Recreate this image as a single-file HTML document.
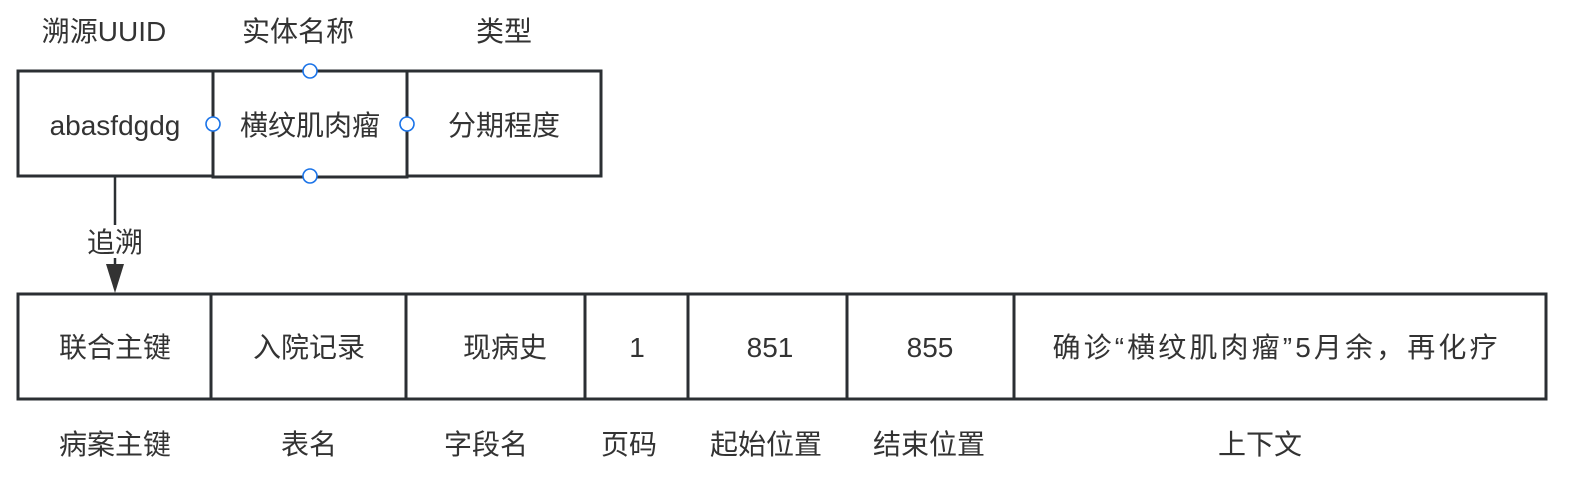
<!DOCTYPE html>
<html><head><meta charset="utf-8"><style>
body{margin:0;background:#fff;}
svg{display:block}
text{font-family:"Liberation Sans","Noto Sans CJK SC",sans-serif;font-size:28px;fill:#333;text-anchor:middle}
</style></head><body>
<svg width="1570" height="480" xmlns="http://www.w3.org/2000/svg">
<g fill="none" stroke="#2b2f33" stroke-width="3">
<rect x="18" y="71" width="195" height="105"/>
<rect x="213" y="71" width="194" height="106"/>
<rect x="407" y="71" width="194" height="105"/>
<rect x="18" y="294" width="1528" height="105"/>
<line x1="211" y1="294" x2="211" y2="399"/>
<line x1="406" y1="294" x2="406" y2="399"/>
<line x1="585" y1="294" x2="585" y2="399"/>
<line x1="688" y1="294" x2="688" y2="399"/>
<line x1="847" y1="294" x2="847" y2="399"/>
<line x1="1014" y1="294" x2="1014" y2="399"/>
<line x1="115" y1="177" x2="115" y2="225" stroke-width="2.5"/>
<line x1="115" y1="258" x2="115" y2="268" stroke-width="2.5"/>
</g>
<polygon points="106,264 124,264 115,293" fill="#333"/>
<g fill="#fff" stroke="#1a73e8" stroke-width="1.6">
<circle cx="310" cy="71" r="7"/><circle cx="310" cy="176" r="7"/>
<circle cx="213" cy="124" r="7"/><circle cx="407" cy="124" r="7"/>
</g>
<text x="104" y="41">溯源UUID</text>
<text x="298" y="41">实体名称</text>
<text x="504" y="41">类型</text>
<text x="115" y="135">abasfdgdg</text>
<text x="310" y="135">横纹肌肉瘤</text>
<text x="504" y="135">分期程度</text>
<text x="115" y="252">追溯</text>
<text x="115" y="357">联合主键</text>
<text x="309" y="357">入院记录</text>
<text x="505" y="357">现病史</text>
<text x="637" y="357">1</text>
<text x="770" y="357">851</text>
<text x="930" y="357">855</text>
<text x="1275" y="357" textLength="445" lengthAdjust="spacing">确诊“横纹肌肉瘤”5月余，再化疗</text>
<text x="115" y="454">病案主键</text>
<text x="309" y="454">表名</text>
<text x="486" y="454">字段名</text>
<text x="629" y="454">页码</text>
<text x="766" y="454">起始位置</text>
<text x="929" y="454">结束位置</text>
<text x="1260" y="454">上下文</text>
</svg>
</body></html>
